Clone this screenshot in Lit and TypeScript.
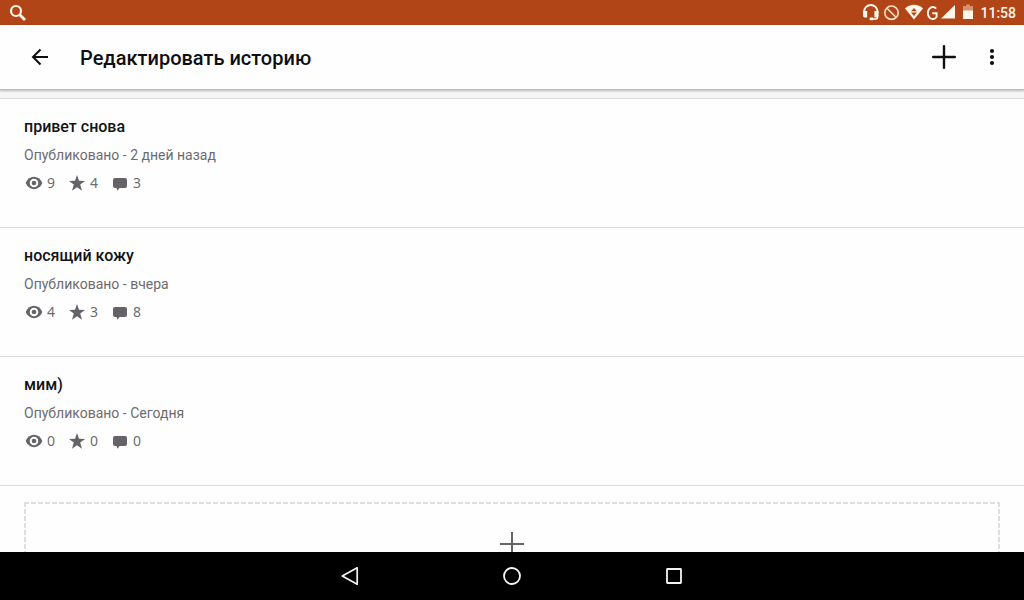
import { LitElement, html, css, svg } from "lit";
import { customElement, property } from "lit/decorators.js";

interface Part {
  title: string;
  status: string;
  views: number;
  votes: number;
  comments: number;
}

const parts: Part[] = [
  { title: "привет снова", status: "Опубликовано - 2 дней назад", views: 9, votes: 4, comments: 3 },
  { title: "носящий кожу", status: "Опубликовано - вчера", views: 4, votes: 3, comments: 8 },
  { title: "мим)", status: "Опубликовано - Сегодня", views: 0, votes: 0, comments: 0 },
];

const icon = (width: number, height: number, body: unknown) => html`
  <svg width=${width} height=${height} viewBox="0 0 ${width} ${height}" aria-hidden="true">${body}</svg>
`;

@customElement("status-bar")
class StatusBar extends LitElement {
  static styles = css`
    :host {
      display: flex;
      align-items: center;
      justify-content: space-between;
      height: 25px;
      padding: 0 8px;
      background: #b24517;
      color: #fff6ea;
      font: 500 14px/24px Roboto, sans-serif;
    }
    svg {
      display: block;
    }
    .tray {
      display: flex;
      align-items: center;
    }
    .clock {
      margin-left: 6px;
    }
  `;

  render() {
    return html`
      ${icon(20, 25, svg`
        <circle cx="8" cy="11" r="5" fill="none" stroke="currentColor" stroke-width="2.2"/>
        <path d="M11.5 14.5L17 20" fill="none" stroke="currentColor" stroke-width="2.8"/>`)}
      <div class="tray">
        ${icon(20, 25, svg`
          <path d="M3.2 13v-1.5a6.6 6.6 0 0 1 13.200 0V13" fill="none" stroke="currentColor" stroke-width="2"/>
          <path d="M2 11H6.200v6.500H4a2 2 0 0 1-2-2zM13.400 11h4.200v4.500a2 2 0 0 1-2 2h-2.200z" fill="currentColor"/>
          <path d="M16.500 15v2.500a1.500 1.500 0 0 1-1.500 1.500h-5" fill="none" stroke="currentColor" stroke-width="1.600"/>
          <rect x="8.500" y="17.500" width="4" height="2.800" rx="1" fill="currentColor"/>`)}
        ${icon(21, 25, svg`
          <circle cx="10.500" cy="12.700" r="6.700" fill="none" stroke="#fbe3c6" stroke-width="1.600"/>
          <path d="M6 8.200l9 9" stroke="#fbe3c6" stroke-width="1.600"/>`)}
        ${icon(22, 25, svg`
          <path d="M3 8.500C8 3.500 16 3.500 21 8.500L12 19.500z" fill="currentColor"/>
          <path d="M9 11.200L12 8l3 3.200zM9 12.600h6L12 16z" fill="#b24517"/>`)}
        ${icon(16, 25, svg`
          <path d="M12.200 8.600A5 6 0 1 0 12.600 17V13.200H8.300" fill="none" stroke="currentColor" stroke-width="1.900"/>`)}
        ${icon(20, 25, svg`<path d="M15 5v13.500H1z" fill="currentColor"/>`)}
        ${icon(14, 25, svg`
          <path d="M3 6h3V4.500h4V6h3v5H3z" fill="#d7906c"/>
          <path d="M3 10.500h10v8.500H3z" fill="currentColor"/>`)}
        <time class="clock">11:58</time>
      </div>
    `;
  }
}

@customElement("app-header")
class AppHeader extends LitElement {
  static styles = css`
    :host {
      display: flex;
      align-items: center;
      height: 64px;
      padding: 0 8px 0 16px;
      background: #fefefe;
      color: #0f0f12;
      border-bottom: 1px solid #bebdbf;
      box-shadow: 0 1px 2px rgba(0, 0, 0, 0.25);
      z-index: 1;
    }
    button {
      display: grid;
      place-items: center;
      width: 48px;
      height: 48px;
      padding: 0;
      border: 0;
      background: none;
      color: inherit;
    }
    h1 {
      flex: 1;
      margin: 0;
      padding: 2px 0 0 16px;
      font: 500 20px/24px Roboto, sans-serif;
    }
  `;

  render() {
    return html`
      <button aria-label="Назад">
        ${icon(24, 24, svg`<path d="M20 12H5M12.500 4.500L5 12l7.500 7.500" fill="none" stroke="currentColor" stroke-width="2"/>`)}
      </button>
      <h1>Редактировать историю</h1>
      <button aria-label="Добавить главу">
        ${icon(24, 24, svg`<path d="M12 1.200v21.600M1.200 12h21.600" fill="none" stroke="currentColor" stroke-width="2.400" stroke-linecap="round"/>`)}
      </button>
      <button aria-label="Ещё">
        ${icon(24, 24, svg`
          <circle cx="12" cy="6" r="2.100" fill="currentColor"/>
          <circle cx="12" cy="12" r="2.100" fill="currentColor"/>
          <circle cx="12" cy="18" r="2.100" fill="currentColor"/>`)}
      </button>
    `;
  }
}

@customElement("story-part")
class StoryPart extends LitElement {
  @property({ attribute: false }) part!: Part;

  static styles = css`
    :host {
      display: block;
      padding: 16px 24px 32px;
      border-bottom: 1px solid #dcdbdd;
      color: #6d6c6f;
      font-family: Roboto, sans-serif;
    }
    h2 {
      margin: 0;
      color: #121214;
      font-size: 16px;
      font-weight: 500;
      line-height: 24px;
    }
    p {
      margin: 4px 0;
      font-size: 14px;
      line-height: 24px;
    }
    .stats {
      display: flex;
      gap: 12px;
      height: 24px;
    }
    .stat {
      display: flex;
      align-items: center;
      gap: 3px;
      font: 14px/24px "Noto Sans", sans-serif;
    }
    svg {
      color: #656367;
    }
  `;

  render() {
    const { title, status, views, votes, comments } = this.part;
    return html`
      <h2>${title}</h2>
      <p>${status}</p>
      <div class="stats">
        <span class="stat">
          ${icon(20, 20, svg`
            <path d="M1.700 10C5 1.800 15 1.800 18.300 10C15 18.200 5 18.200 1.700 10z" fill="currentColor"/>
            <circle cx="10" cy="10" r="4.300" fill="#fefefe"/>
            <circle cx="10" cy="10" r="2.300" fill="currentColor"/>`)}
          ${views}
        </span>
        <span class="stat">
          ${icon(20, 20, svg`<path d="M10 2L12 7.800L18 8L13.200 11.600L15 17.700L10 14.200L5 17.700L6.800 11.600L2 8L8 7.800z" fill="currentColor"/>`)}
          ${votes}
        </span>
        <span class="stat">
          ${icon(20, 20, svg`<path d="M5 5h10a2 2 0 0 1 2 2v6a2 2 0 0 1-2 2h-5.500L7.500 17.800L6.500 15H5a2 2 0 0 1-2-2V7a2 2 0 0 1 2-2z" fill="currentColor"/>`)}
          ${comments}
        </span>
      </div>
    `;
  }
}

@customElement("nav-bar")
class NavBar extends LitElement {
  static styles = css`
    :host {
      display: flex;
      justify-content: center;
      gap: 114px;
      height: 48px;
      background: #000;
      color: #f4f4f4;
    }
    button {
      display: grid;
      place-items: center;
      width: 48px;
      padding: 0;
      border: 0;
      background: none;
      color: inherit;
    }
  `;

  render() {
    return html`
      <button aria-label="Назад">
        ${icon(24, 24, svg`<path d="M19.200 3.800v16.400L4.300 12z" fill="none" stroke="currentColor" stroke-width="1.700" stroke-linejoin="round"/>`)}
      </button>
      <button aria-label="Главный экран">
        ${icon(24, 24, svg`<circle cx="12" cy="12" r="8" fill="none" stroke="currentColor" stroke-width="1.800"/>`)}
      </button>
      <button aria-label="Обзор">
        ${icon(24, 24, svg`<rect x="5" y="5" width="14" height="14" rx="0.500" fill="none" stroke="currentColor" stroke-width="1.800"/>`)}
      </button>
    `;
  }
}

@customElement("app-root")
class AppRoot extends LitElement {
  static styles = css`
    :host {
      display: flex;
      flex-direction: column;
      height: 100vh;
      background: #fefefe;
    }
    main {
      flex: 1;
      min-height: 0;
      overflow: hidden;
    }
    .list {
      border-top: 8px solid #f5f4f6;
    }
    .rule {
      height: 1px;
      background: #dcdbdd;
    }
    .add {
      --dash: #dfdde0 0 5px, transparent 5px 7px;
      display: flex;
      justify-content: center;
      box-sizing: border-box;
      width: calc(100% - 48px);
      height: 96px;
      margin: 16px 24px;
      padding: 30px 0 0;
      border: 0;
      color: #656367;
      background:
        repeating-linear-gradient(to right, var(--dash)) top / 100% 2px no-repeat,
        repeating-linear-gradient(to right, var(--dash)) bottom / 100% 2px no-repeat,
        repeating-linear-gradient(to bottom, var(--dash)) left / 2px 100% no-repeat,
        repeating-linear-gradient(to bottom, var(--dash)) right / 2px 100% no-repeat;
    }
  `;

  render() {
    return html`
      <status-bar></status-bar>
      <app-header></app-header>
      <main>
        <div class="list">
          <div class="rule"></div>
          ${parts.map((part) => html`<story-part .part=${part}></story-part>`)}
        </div>
        <button class="add" aria-label="Добавить главу">
          ${icon(24, 24, svg`<path d="M12 0v24M0 12h24" fill="none" stroke="currentColor" stroke-width="2"/>`)}
        </button>
      </main>
      <nav-bar></nav-bar>
    `;
  }
}
